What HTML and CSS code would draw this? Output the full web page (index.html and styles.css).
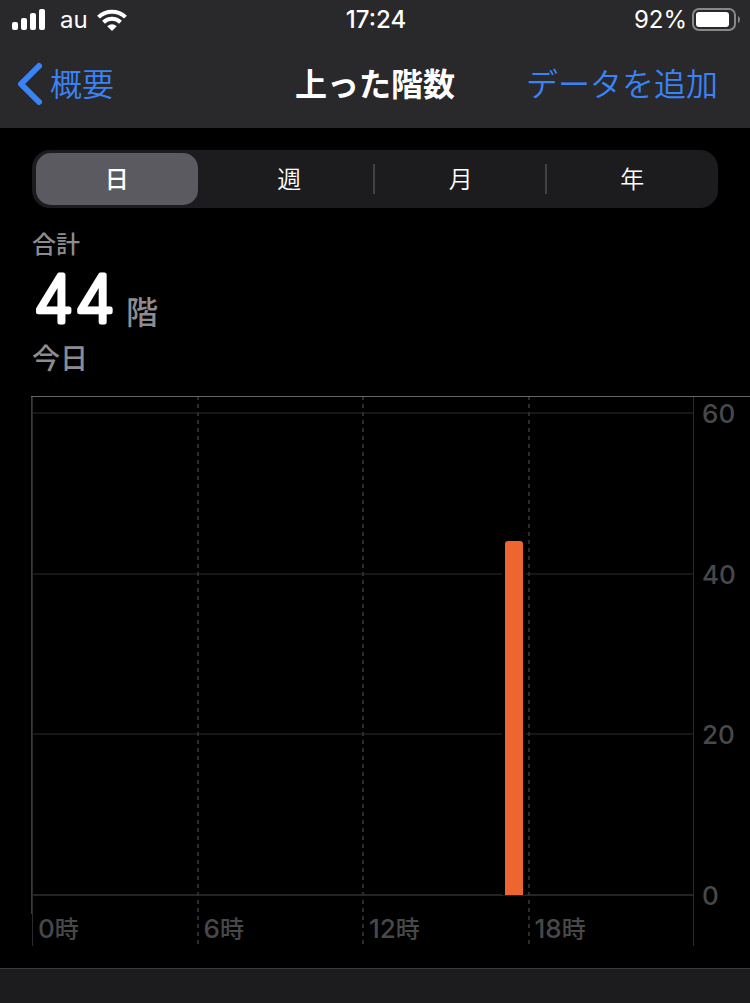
FILE: index.html
```html
<!DOCTYPE html>
<html lang="ja">
<head>
    <meta charset="UTF-8">
    <meta name="viewport" content="width=device-width, initial-scale=1">
    <title>上った階数</title>
    <link rel="stylesheet" href="styles.css">
</head>
<body>
<header class="header">
    <div class="status">
        <div class="status-left">
            <svg class="signal" width="34" height="22" viewBox="0 0 34 22" fill="#fff">
                <rect x="0" y="13" width="6" height="8" rx="2"/>
                <rect x="9" y="9" width="6" height="12" rx="2"/>
                <rect x="18" y="4" width="6" height="17" rx="2"/>
                <rect x="27" y="0" width="6" height="21" rx="2"/>
            </svg>
            <span>au</span>
            <svg class="wifi" width="30" height="22" viewBox="0 0 30 22">
                <g fill="none" stroke="#fff" stroke-width="4">
                    <path d="M1.5 8.1A19.5 19.5 0 0 1 28.500 8.100"/>
                    <path d="M6.500 13.200A12.300 12.300 0 0 1 23.500 13.200"/>
                </g>
                <path d="M15 22L10.200 17.200Q15 13.200 19.800 17.200Z" fill="#fff"/>
            </svg>
        </div>
        <span class="time">17:24</span>
        <div class="status-right">
            <span>92%</span>
            <svg width="48" height="24" viewBox="0 0 48 24">
                <rect x="1" y="1" width="42" height="21" rx="6" fill="none" stroke="#88888a" stroke-width="2"/>
                <rect x="4" y="4" width="33" height="15" rx="3" fill="#fff"/>
                <path d="M46 8Q48 9 48 11.500Q48 14 46 15Z" fill="#88888a"/>
            </svg>
        </div>
    </div>
    <nav class="nav">
        <a class="back" href="#">
            <svg width="26" height="44" viewBox="0 0 26 44" fill="none" stroke="#3a83f7" stroke-width="6" stroke-linecap="round" stroke-linejoin="round">
                <path d="M23 4L5 22L23 40"/>
            </svg>
            <span>概要</span>
        </a>
        <h1>上った階数</h1>
        <a class="add" href="#">データを追加</a>
    </nav>
</header>

<main>
    <div class="segment">
        <input type="radio" name="range" id="day" checked>
        <label for="day">日</label>
        <input type="radio" name="range" id="week">
        <label for="week">週</label>
        <input type="radio" name="range" id="month">
        <label for="month">月</label>
        <input type="radio" name="range" id="year">
        <label for="year">年</label>
    </div>

    <div class="summary">
        <p class="total">合計</p>
        <div class="value">
            <!-- svg text, so that the stroke gets round corners -->
            <svg class="number" width="85" height="72">
                <text x="1" y="57">44</text>
            </svg>
            <span>階</span>
        </div>
        <p class="date">今日</p>
    </div>

    <div class="chart">
        <div class="plot">
            <div class="lines">
                <i></i>
                <i></i>
                <i></i>
                <i class="base"></i>
            </div>
            <div class="hours">
                <div>0<span>時</span></div>
                <div>6<span>時</span></div>
                <div>12<span>時</span></div>
                <div>18<span>時</span></div>
            </div>
            <!-- 24 columns, one for each hour -->
            <div class="bars">
                <div class="bar" style="grid-column: 18; height: 73.4%"></div>
            </div>
        </div>
        <div class="scale">
            <span>60</span>
            <span>40</span>
            <span>20</span>
            <span>0</span>
        </div>
    </div>
</main>
<footer class="bottom"></footer>
</body>
</html>
```
FILE: styles.css
```css
* {
    box-sizing: border-box;
    margin: 0;
    padding: 0;
}

body {
    min-height: 100vh;
    display: flex;
    flex-direction: column;
    background-color: #000;
    color: #fff;
    font-family: Inter, "Noto Sans CJK JP", sans-serif;
}

svg {
    display: block;
    flex: none;
}

/* header */
.header {
    height: 128px;
    background-color: #29292b;
}

.status {
    display: grid;
    grid-template-columns: 1fr auto 1fr;
    align-items: center;
    height: 40px;
    padding: 0 10px 0 12px;
    font-size: 24px;
    line-height: 40px;
}

.status-left,
.status-right {
    display: flex;
    align-items: center;
}

.signal {
    margin-right: 14px;
}

.wifi {
    margin-left: 9px;
}

.time {
    font-weight: 500;
}

.status-right {
    justify-content: flex-end;
    gap: 5px;
}

.nav {
    display: grid;
    grid-template-columns: 1fr auto 1fr;
    align-items: start;
    height: 88px;
    padding: 0 16px;
    font-family: "Noto Sans CJK JP", sans-serif;
    font-size: 32px;
    line-height: 84px;
}

.nav h1 {
    font-size: 32px;
    font-weight: 700;
}

.nav a {
    color: #3a83f7;
    font-weight: 350;
    text-decoration: none;
}

.back {
    display: flex;
    gap: 8px;
}

.back svg {
    margin-top: 22px;
}

.add {
    padding-right: 16px;
    text-align: right;
    white-space: nowrap;
}

/* day / week / month / year */
.segment {
    display: grid;
    grid-template-columns: repeat(4, 1fr);
    height: 58px;
    margin: 22px 32px 0;
    padding: 3px 0;
    border-radius: 18px;
    background-color: #1c1c1f;
    font-size: 24px;
    line-height: 54px;
    text-align: center;
}

.segment input {
    position: absolute;
    opacity: 0;
}

.segment label {
    height: 52px;
    font-weight: 350;
    background: linear-gradient(#414145, #414145) right center / 2px 30px no-repeat;
}

.segment label:last-of-type {
    background: none;
}

.segment input:checked + label {
    margin: 0 6px 0 4px;
    border-radius: 15px;
    background: #5b5a60;
    font-weight: 500;
}

/* total */
.summary {
    padding: 17px 32px 0;
    color: #8d8c92;
    font-weight: 500;
}

.total {
    font-size: 24px;
    line-height: 40px;
}

.value {
    display: flex;
    gap: 9px;
    height: 72px;
    font-size: 32px;
    line-height: 96px;
}

.number {
    overflow: visible;
}

.number text {
    fill: #fff;
    stroke: #fff;
    stroke-width: 5px;
    stroke-linejoin: round;
    font-size: 64px;
    font-weight: 200;
    font-variant-numeric: tabular-nums;
}

.date {
    font-size: 28px;
    line-height: 44px;
}

/* chart */
.chart {
    display: grid;
    grid-template-columns: 1fr 56px;
    height: 547px;
    margin: 15px 0 25px 31px;
    border-top: 1px solid #67666b;
    color: #48484b;
    font-size: 26px;
    font-weight: 500;
}

.plot {
    display: grid;
    border-right: 1px solid #2a2a2c;
}

.lines,
.hours,
.bars {
    grid-area: 1 / 1;
}

.lines {
    display: flex;
    flex-direction: column;
    justify-content: space-between;
    height: 484px;
    margin-top: 15px;
}

.lines i {
    height: 2px;
    background-color: #161617;
}

.lines .base {
    background-color: #242426;
}

.hours {
    display: grid;
    grid-template-columns: repeat(4, 1fr);
}

.hours div {
    padding: 516px 0 0 7px;
    line-height: 32px;
    background: repeating-linear-gradient(#2c2c2e 0 3px, transparent 3px 7px, #2c2c2e 7px 8px) left top / 2px 100% no-repeat;
}

.hours div:first-child {
    background:
        linear-gradient(#3a3a3c, #3a3a3c) left top / 1px 517px no-repeat,
        linear-gradient(#2a2a2c, #2a2a2c) 1px top / 1px 100% no-repeat;
}

.hours span {
    font-size: 24px;
}

.bars {
    display: grid;
    grid-template-columns: repeat(24, 1fr);
    align-items: end;
    height: 482px;
    margin-top: 16px;
}

.bar {
    justify-self: center;
    width: 18px;
    border-radius: 3px 3px 0 0;
    background-color: #ed652f;
    box-shadow: -3px 0 #000, 3px 0 #000;
}

.scale {
    display: flex;
    flex-direction: column;
    justify-content: space-between;
    height: 516px;
    padding-left: 8px;
    line-height: 34px;
}

.bottom {
    flex: 1;
    min-height: 35px;
    border-top: 1px solid #3a3a3c;
    background-color: #1c1c1e;
}
```
